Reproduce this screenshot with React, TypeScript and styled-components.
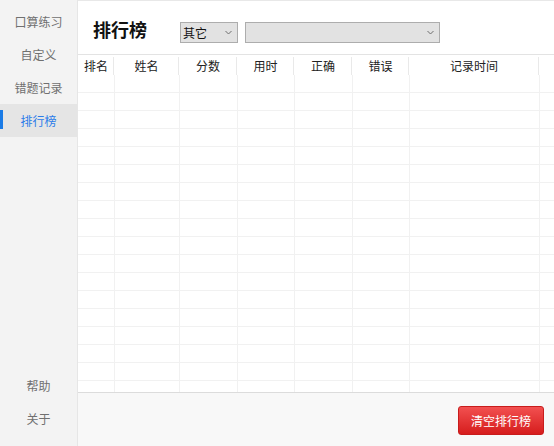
import React from 'react';
import styled, { createGlobalStyle } from 'styled-components';

const GlobalStyle = createGlobalStyle`
  html, body {
    margin: 0;
    padding: 0;
    background: #ffffff;
  }
  body {
    font-family: "Noto Sans CJK SC", "Liberation Sans", sans-serif;
    color: #333333;
  }
`;

const Shell = styled.div`
  display: flex;
  width: 554px;
  height: 446px;
  overflow: hidden;
`;

const Sidebar = styled.nav`
  width: 78px;
  flex-shrink: 0;
  background: #f3f3f3;
  border-right: 1px solid #e6e6e6;
  display: flex;
  flex-direction: column;
  padding: 5px 0 11px;
  box-sizing: border-box;
`;

const NavGroup = styled.div`
  display: flex;
  flex-direction: column;
`;

const Spacer = styled.div`
  flex: 1;
`;

const NavItem = styled.div<{ active?: boolean }>`
  position: relative;
  height: 33px;
  display: flex;
  align-items: center;
  justify-content: center;
  font-size: 12px;
  color: ${p => (p.active ? '#2b7ce9' : '#707070')};
  background: ${p => (p.active ? '#e5e5e5' : 'transparent')};

  &::before {
    content: '';
    display: ${p => (p.active ? 'block' : 'none')};
    position: absolute;
    left: 0;
    top: 6px;
    width: 3px;
    height: 19px;
    background: #1a7be6;
  }
`;

const Main = styled.main`
  flex: 1;
  display: flex;
  flex-direction: column;
  min-width: 0;
  border-top: 1px solid #e8e8e8;
  box-sizing: border-box;
`;

const Header = styled.header`
  height: 53px;
  display: flex;
  align-items: center;
  padding-left: 15px;
  border-bottom: 1px solid #e3e3e3;
  flex-shrink: 0;
`;

const Title = styled.h1`
  margin: 0 33px 0 0;
  font-size: 18px;
  font-weight: 700;
  color: #111111;
  line-height: 1;
  position: relative;
  top: 1px;
`;

const Dropdown = styled.div<{ width: number }>`
  width: ${p => p.width}px;
  height: 21px;
  box-sizing: border-box;
  margin: 10px 7px 0 0;
  background: #e2e2e2;
  border: 1px solid #adadad;
  display: flex;
  align-items: center;
  justify-content: space-between;
  padding: 0 5px 0 2px;
  font-size: 12px;
  color: #111111;
`;

const Chevron = () => (
  <svg width="7" height="5" viewBox="0 0 7 5">
    <path d="M0.5 1 L3.5 4 L6.5 1" fill="none" stroke="#6f6f6f" strokeWidth="1" />
  </svg>
);

const TableWrap = styled.div`
  flex: 1;
  overflow: hidden;
  min-height: 0;
`;

const Grid = styled.table`
  border-collapse: collapse;
  table-layout: fixed;
  width: 520px;
`;

const HeadCell = styled.th<{ w: number }>`
  width: ${p => p.w}px;
  height: 20px;
  padding: 0;
  font-size: 12px;
  font-weight: 400;
  color: #222222;
  text-align: center;
  position: relative;
  white-space: nowrap;

  &::after {
    content: '';
    position: absolute;
    right: 0;
    top: 2px;
    bottom: 0;
    width: 1px;
    background: #e9e9e9;
  }
`;

const Cell = styled.td`
  height: 17px;
  padding: 0;
  border-right: 1px solid #f1f1f1;
  border-bottom: 1px solid #f1f1f1;
`;

const Footer = styled.footer`
  height: 53px;
  flex-shrink: 0;
  background: #f8f8f8;
  border-top: 1px solid #dcdcdc;
  display: flex;
  align-items: center;
  justify-content: flex-end;
  padding-right: 10px;
`;

const DangerButton = styled.button`
  width: 86px;
  height: 29px;
  border: 1px solid #c81c1c;
  border-radius: 3px;
  background: linear-gradient(#f25050, #d61d1d);
  color: #ffffff;
  font-family: inherit;
  font-size: 12px;
  padding: 0;
  margin-top: 1px;
  cursor: pointer;
`;

const columns = [
  { title: '排名', w: 36 },
  { title: '姓名', w: 65 },
  { title: '分数', w: 58 },
  { title: '用时', w: 57 },
  { title: '正确', w: 58 },
  { title: '错误', w: 57 },
  { title: '记录时间', w: 130 },
  { title: '', w: 60 },
];

const rows = Array.from({ length: 20 }, (_, i) => i);

const App = (): JSX.Element => {
  return (
    <>
      <GlobalStyle />
      <Shell>
        <Sidebar>
          <NavGroup>
            <NavItem>口算练习</NavItem>
            <NavItem>自定义</NavItem>
            <NavItem>错题记录</NavItem>
            <NavItem active>排行榜</NavItem>
          </NavGroup>
          <Spacer />
          <NavGroup>
            <NavItem>帮助</NavItem>
            <NavItem>关于</NavItem>
          </NavGroup>
        </Sidebar>
        <Main>
          <Header>
            <Title>排行榜</Title>
            <Dropdown width={58}>
              <span>其它</span>
              <Chevron />
            </Dropdown>
            <Dropdown width={195}>
              <span />
              <Chevron />
            </Dropdown>
          </Header>
          <TableWrap>
            <Grid>
              <thead>
                <tr>
                  {columns.map(c => (
                    <HeadCell key={c.title + c.w} w={c.w}>
                      {c.title}
                    </HeadCell>
                  ))}
                </tr>
              </thead>
              <tbody>
                {rows.map(r => (
                  <tr key={r}>
                    {columns.map(c => (
                      <Cell key={c.title + c.w} />
                    ))}
                  </tr>
                ))}
              </tbody>
            </Grid>
          </TableWrap>
          <Footer>
            <DangerButton>清空排行榜</DangerButton>
          </Footer>
        </Main>
      </Shell>
    </>
  );
};

export default App;
